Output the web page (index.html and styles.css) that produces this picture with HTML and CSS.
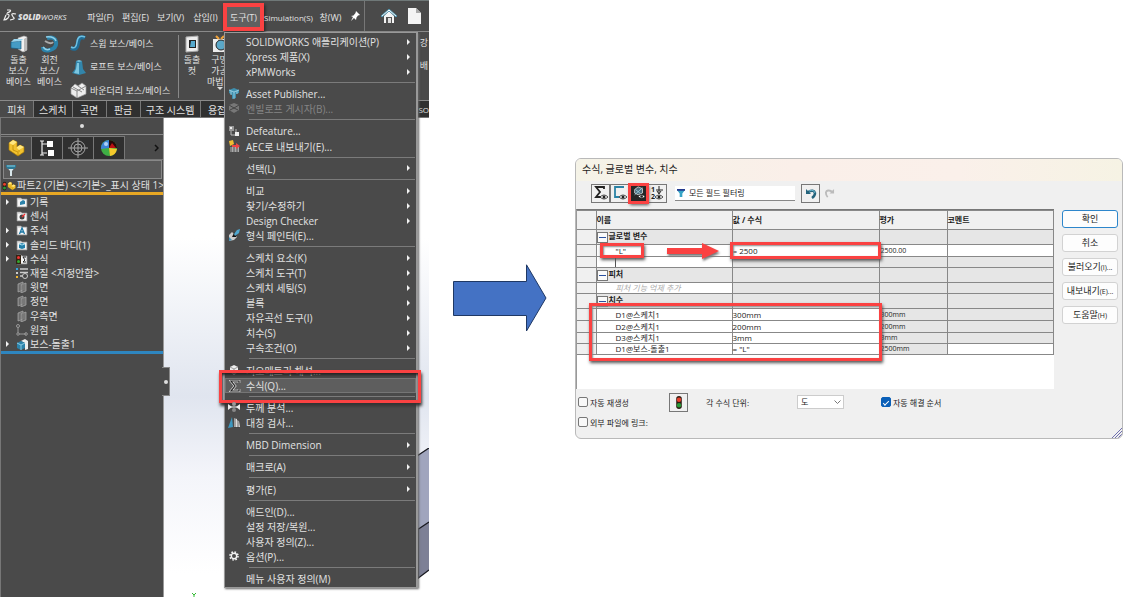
FILE: index.html
```html
<!DOCTYPE html>
<html lang="ko">
<head>
<meta charset="utf-8">
<meta name="viewport" content="width=device-width, initial-scale=1">
<title>SOLIDWORKS 수식</title>
<link rel="stylesheet" href="styles.css">
</head>
<body>
<svg class="defs" aria-hidden="true">
  <defs>
    <symbol id="boss" viewBox="0 0 18 18"><path d="M8 3l6-2 3 1v13l-4 2-5-3z" fill="#f2f2f2" stroke="#aaa" stroke-width=".6"/><path d="M14 4l3-2v13l-3 2z" fill="#bbb"/><path d="M1 7l10-1v8L1 13z" fill="#459cc5" stroke="#155d83" stroke-width=".7"/><path d="M1 7l3-3h9l-2 2z" fill="#9ad5ee"/></symbol>
    <symbol id="folder" viewBox="0 0 12 12"><path d="M1 2h4l1 1h5v8H1z" fill="#ddd" stroke="#999" stroke-width=".6"/><path d="M2 4h8v6H2z" fill="#f6f6f6"/></symbol>
    <symbol id="plane" viewBox="0 0 12 12"><path d="M2 3l5-2v8l-5 2zM5 4l5-2v8l-5 2z" fill="#777" stroke="#aaa" stroke-width=".7"/><path d="M4 4v6M7 3v7" stroke="#555" stroke-width=".6"/></symbol>
    <symbol id="part" viewBox="0 0 18 18"><path d="M2 4l4-3 4 2v5l3-2 4 2v5l-6 4-9-6z" fill="#f2c230" stroke="#a97800" stroke-width=".7"/><path d="M2 4l4 2 4-3-4-2zM10 9l2 2 5-3-4-2-3 2z" fill="#ffe781"/><path d="M6 6v5l5 2v4M12 11v2" fill="none" stroke="#b78400" stroke-width=".7"/></symbol>
    <symbol id="funnel" viewBox="0 0 10 12"><path d="M0 2h10L6 7v5H4V7z" fill="#d8e6ea"/><path d="M0 1h10v2L8 5H2L0 3z" fill="#2b7995"/><path d="M1 2h8" stroke="#8ed0e2"/></symbol>
    <symbol id="lights" viewBox="0 0 8 14"><rect x="1" y="0" width="6" height="14" rx="3" fill="#2b1b12"/><circle cx="4" cy="4" r="2.4" fill="#e7402d"/><circle cx="4" cy="10" r="2.4" fill="#289a37"/></symbol>
    <symbol id="eye" viewBox="0 0 8 6"><path d="M0 3q4-4 8 0-4 4-8 0z" fill="#fff" stroke="#222" stroke-width=".8"/><circle cx="4" cy="3" r="1.5" fill="#222"/></symbol>
  </defs>
</svg>

<main class="stage">
  <section class="app" aria-label="SOLIDWORKS">
    <header class="menubar">
      <div class="logo">
        <svg width="14" height="14" viewBox="0 0 14 14" fill="none" stroke="#eee" stroke-width="1.2"><path d="M4 1h3q2 1-3 3M3 5q5 0 2 4-2 2-4 2l2-5M13 5q-5-1-4 1t2 3-4 2"/></svg>
        <span><b>SOLID</b>WORKS</span>
      </div>
      <nav class="menus">
        <button>파일(F)</button><button>편집(E)</button><button>보기(V)</button><button>삽입(I)</button><button class="open">도구(T)</button><button class="simulation">Simulation(S)</button><button>창(W)</button>
      </nav>
      <svg class="pin" width="10" height="10" viewBox="0 0 10 10"><path d="M5 0l4 4-2 .5L5.500 6.500 5 9 3 7 0 10l2-4-2-1 2.500-.5L4.500 2z" fill="#fff"/></svg>
      <div class="quick">
        <svg width="16" height="16" viewBox="0 0 16 16"><path d="M3 8l5-5 5 5v7H3z" fill="#f5f5f5"/><path d="M0 8l8-7 8 7-1 1-7-6-7 6z" fill="#fff" stroke="#3b8fb0" stroke-width=".8"/><path d="M5 9h6v6H5z" fill="#555"/><path d="M7 10h3v5H7z" fill="#ddd"/></svg>
        <svg width="13" height="16" viewBox="0 0 13 16"><path d="M0 0h8l5 5v11H0z" fill="#f4f4f4"/><path d="M8 0v5h5z" fill="#aaa"/></svg>
      </div>
    </header>

    <div class="ribbon">
      <button class="tool"><svg width="18" height="18"><use href="#boss"/></svg>돌출<br>보스/<br>베이스</button>
      <button class="tool"><svg width="18" height="18" viewBox="0 0 18 18"><path d="M6 3q8-2 9 4t-6 8-7-3" fill="none" stroke="#2b82aa" stroke-width="4"/><path d="M4 6q6 4 8 1" fill="none" stroke="#aaa" stroke-width="2"/><path d="M5 2q8-1 10 4M2 12q3 4 7 2" fill="none" stroke="#90d0e8" stroke-width="1.500"/></svg>회전<br>보스/<br>베이스</button>
      <div class="tool-list">
        <button><svg width="17" height="16" viewBox="0 0 17 16"><path d="M1 13q6 3 7-5t7-5" fill="none" stroke="#206c95" stroke-width="4"/><path d="M1 12q5 3 6-5t8-5" fill="none" stroke="#6fc1e3" stroke-width="1.500"/></svg>스윕 보스/베이스</button>
        <button><svg width="17" height="16" viewBox="0 0 17 16"><path d="M6 2h6l1 8 3 4-7 2-7-2 3-4z" fill="#3285aa"/><path d="M6 2l3-1 3 1-3 1zM7 4h2v11l-5-1 2-4z" fill="#7cc5df"/></svg>로프트 보스/베이스</button>
        <button><svg width="17" height="16" viewBox="0 0 17 16"><path d="M1 6l4-4 3 2 4-3 4 3v8l-9 4-6-4z" fill="#eee" stroke="#999" stroke-width=".7"/><path d="M1 6l6 3 9-5M7 9v7M3 5l9 5M8 4l6 4" fill="none" stroke="#888"/></svg>바운더리 보스/베이스</button>
      </div>
      <button class="tool cut"><svg width="16" height="18" viewBox="0 0 16 18"><path d="M2 2l12-1v15L2 17z" fill="#eee" stroke="#aaa"/><path d="M5 5h7v8H5z" fill="#222"/><path d="M7 6h4v6H6z" fill="#56a9cd"/></svg>돌출<br>컷</button>
      <button class="tool hole"><svg width="16" height="18" viewBox="0 0 16 18"><path d="M1 4h13v13H1z" fill="#eee"/><circle cx="9" cy="10" r="5" fill="#5ba8c8" stroke="#222"/><path d="M4 1l3 3M12 1L9 4" stroke="#f0a33a" stroke-width="2"/></svg>구멍<br>가공<br>마법사<i></i></button>
      <div class="ribbon-end"><span>강</span><span>배</span></div>
    </div>

    <nav class="tabs">
      <button class="active">피처</button><button>스케치</button><button>곡면</button><button>판금</button><button class="wide">구조 시스템</button><button>용접</button><button class="last">SO</button>
    </nav>

    <div class="work">
      <aside class="panel">
        <div class="grip"><i></i></div>
        <div class="panel-tabs">
          <button class="active" aria-label="트리"><svg width="18" height="18"><use href="#part"/></svg></button>
          <button aria-label="속성"><svg width="18" height="18" viewBox="0 0 18 18"><path d="M4 2v14M4 5h5M4 14h5M2 2h4M2 16h4" fill="none" stroke="#eee" stroke-width="1.200"/><path d="M9 2h6v6H9zM10 11h6v6h-6z" fill="#fff"/></svg></button>
          <button aria-label="치수"><svg width="20" height="20" viewBox="0 0 20 20" fill="none" stroke="#a5a5a5"><circle cx="10" cy="10" r="7"/><circle cx="10" cy="10" r="4"/><path d="M10 0v20M0 10h20"/></svg></button>
          <button aria-label="표시"><svg width="18" height="18" viewBox="0 0 18 18"><circle cx="9" cy="9" r="8" fill="#3fae45"/><path d="M9 9L1 10A8 8 0 0 1 9 1z" fill="#3b83d8"/><path d="M9 9V1a8 8 0 0 1 8 8z" fill="#260a0a"/><path d="M9 9l3-5 4 5z" fill="#b11"/><path d="M9 9l8 1q-1 6-7 7z" fill="#f5c92b"/><circle cx="6" cy="5" r="2" fill="#c9e2ff" opacity=".8"/></svg></button>
          <span class="more"><svg width="5" height="8" viewBox="0 0 5 8"><path d="M1 1l3 3-3 3" fill="none" stroke="#111" stroke-width="1.500"/></svg></span>
        </div>
        <div class="tree-filter"><svg width="10" height="12"><use href="#funnel"/></svg></div>
        <div class="root"><svg width="5" height="12"><use href="#lights" width="5" height="12"/></svg><svg width="9" height="10"><use href="#part"/></svg><span>파트2 (기본) &lt;&lt;기본&gt;_표시 상태 1&gt;</span></div>
        <ul class="tree">
          <li class="branch"><svg width="12" height="12" viewBox="0 0 12 12"><use href="#folder"/><path d="M4 9V6l3-2 2 1v3z" fill="#2b82aa"/></svg>기록</li>
          <li><svg width="12" height="12" viewBox="0 0 12 12"><use href="#folder"/><circle cx="6" cy="7" r="2.500" fill="#444"/><path d="M6 7l3-3" stroke="#e33" stroke-width="1.500"/></svg>센서</li>
          <li class="branch"><svg width="12" height="12" viewBox="0 0 12 12"><use href="#folder"/><path d="M3.500 10L6 4l2.500 6M4.500 8h3" fill="none" stroke="#1d77a4" stroke-width="1.300"/></svg>주석</li>
          <li class="branch"><svg width="12" height="12" viewBox="0 0 12 12"><use href="#folder"/><path d="M3 5l3-1 3 1v4l-3 1-3-1z" fill="#2380aa"/><path d="M3 5l3 1 3-1" fill="none" stroke="#a2dbef"/></svg>솔리드 바디(1)</li>
          <li class="branch"><svg width="12" height="12" viewBox="0 0 12 12"><use href="#folder"/><path d="M0 2h5v9H0z" fill="#321"/><circle cx="2.500" cy="4.500" r="1.500" fill="#e33"/><circle cx="2.500" cy="8.500" r="1.500" fill="#3a3"/><path d="M10 4H7l2 3-2 2h3" fill="none" stroke="#222"/></svg>수식</li>
          <li><svg width="12" height="12" viewBox="0 0 12 12"><path d="M4 2h8M4 5.500h8M4 9h4" stroke="#ccc" stroke-width="1.500"/><path d="M0 1h2v2H0z" fill="#36a3da"/><path d="M0 5h2v2H0z" fill="#ccc"/><path d="M0 9h2v2H0z" fill="#efb52c"/><circle cx="9" cy="9" r="2.500" fill="#444" stroke="#ccc"/></svg>재질 &lt;지정안함&gt;</li>
          <li><svg width="12" height="12"><use href="#plane"/></svg>윗면</li>
          <li><svg width="12" height="12"><use href="#plane"/></svg>정면</li>
          <li><svg width="12" height="12"><use href="#plane"/></svg>우측면</li>
          <li><svg width="12" height="12" viewBox="0 0 12 12" fill="none" stroke="#999"><path d="M2 3v7h8"/><circle cx="2" cy="2" r="1.500"/><circle cx="10" cy="10" r="1.300"/><path d="M1 9h2v2H1z" fill="#222"/></svg>원점</li>
          <li class="branch"><svg width="12" height="12" viewBox="0 0 12 12"><path d="M5 3l4-2 3 2v8l-3 1V5z" fill="#eee"/><path d="M1 5l4-2 4 2v5l-4 2-4-2z" fill="#2b82aa"/><path d="M1 5l4 2 4-2M5 7v5" fill="none" stroke="#a2dbef" stroke-width=".8"/></svg>보스-돌출1</li>
        </ul>
      </aside>
      <div class="viewport">
        <div class="handle"><i></i></div>
        <svg class="model" width="12" height="132" viewBox="0 0 12 132"><path d="M0 8L12 0v74L0 82z" fill="#a0a5bd"/><path d="M0 82l12-8v48L0 131z" fill="#7d8096"/><path d="M0 8L12 0M0 82l12-8M0 131l12-9M1 82v49" fill="none" stroke="#17181f" stroke-width="1.300"/></svg>
        <svg class="axis" width="6" height="5" viewBox="0 0 6 5"><path d="M1 1l2 2 2-2M3 3v2" fill="none" stroke="#3b3"/></svg>
      </div>
    </div>

    <div class="popup" role="menu">
      <button class="sub">SOLIDWORKS 애플리케이션(P)</button>
      <button class="sub">Xpress 제품(X)</button>
      <button class="sub">xPMWorks</button>
      <hr>
      <button><svg width="12" height="12" viewBox="0 0 12 12"><path d="M1 3l5-2 5 2v3L8 7v4l-4 1V8L1 6z" fill="#3f8fae"/><path d="M1 3l5 2 5-2M6 5v7M3 4v4M9 4v3" fill="none" stroke="#a9dcec" stroke-width=".8"/></svg>Asset Publisher...</button>
      <button disabled><svg width="12" height="12" viewBox="0 0 12 12"><path d="M1 3l5-2 5 2v5l-5 3-5-3z" fill="#777"/><path d="M1 3l5 3 5-3M2 8l4-2 4 2" fill="none" stroke="#444"/></svg>엔빌로프 게시자(B)...</button>
      <hr>
      <button><svg width="12" height="12" viewBox="0 0 12 12"><path d="M1 1h5v5H1z" fill="#999"/><path d="M2 2h2v2H2zM7 7h4v4H7z" fill="#eee"/><path d="M3 6v4h4M8 4v3" stroke="#bbb" fill="none"/></svg>Defeature...</button>
      <button><svg width="12" height="12" viewBox="0 0 12 12"><path d="M2 7h9v5H2z" fill="#aaa"/><path d="M3 7v5M6 7v5M9 7v5" stroke="#555"/><path d="M1 1l4-1 1 4-4 2z" fill="#f3bd31"/><path d="M4 5h4V3l4 3-4 3V7H4z" fill="#e44"/></svg>AEC로 내보내기(E)...</button>
      <hr>
      <button class="sub">선택(L)</button>
      <hr>
      <button class="sub">비교</button>
      <button class="sub">찾기/수정하기</button>
      <button class="sub">Design Checker</button>
      <button><svg width="12" height="12" viewBox="0 0 12 12"><path d="M1 6l3-3 5 5-3 3-5 1z" fill="#ccc"/><path d="M4 8l2-4 3-1-1 5z" fill="#111"/><path d="M6 5l3-4 3-1-1 4-4 3z" fill="#4fa7cf"/><path d="M1 12V8l3 3z" fill="#418fb4"/></svg>형식 페인터(E)...</button>
      <hr>
      <button class="sub">스케치 요소(K)</button>
      <button class="sub">스케치 도구(T)</button>
      <button class="sub">스케치 세팅(S)</button>
      <button class="sub">블록</button>
      <button class="sub">자유곡선 도구(I)</button>
      <button class="sub">치수(S)</button>
      <button class="sub">구속조건(O)</button>
      <hr>
      <button><svg width="12" height="12" viewBox="0 0 12 12"><path d="M2 3l4-2 4 2v5l-4 3-4-3z" fill="#eee"/><path d="M2 3l4 2 4-2M6 5v6" fill="none" stroke="#999"/></svg>지오메트리 해석...</button>
      <button class="current"><svg width="12" height="12" viewBox="0 0 12 12"><path d="M10 3V1H2l4 5-4 5h8V9" fill="none" stroke="#ddd" stroke-width="2.600"/><path d="M10 3V1H2l4 5-4 5h8V9" fill="none" stroke="#222" stroke-width="1.200"/></svg>수식(Q)...</button>
      <hr>
      <button><svg width="12" height="12" viewBox="0 0 12 12"><path d="M0 3l4 3-4 3zM12 3L8 6l4 3z" fill="#eee"/><path d="M0 6h12" stroke="#eee"/><circle cx="6" cy="3" r="2" fill="#999"/><circle cx="6" cy="9" r="2" fill="#888"/></svg>두께 분석...</button>
      <button><svg width="12" height="12" viewBox="0 0 12 12"><path d="M4 1l1 10-5 1z" fill="#3d98c0"/><path d="M6 2l3 1v8H6zM9 4l2 1 1 6H9z" fill="#ddd"/><path d="M7 2v10M10 4v8" stroke="#333" stroke-width=".7"/></svg>대칭 검사...</button>
      <hr>
      <button class="sub">MBD Dimension</button>
      <hr>
      <button class="sub">매크로(A)</button>
      <hr>
      <button class="sub">평가(E)</button>
      <hr>
      <button>애드인(D)...</button>
      <button>설정 저장/복원...</button>
      <button>사용자 정의(Z)...</button>
      <button><svg width="12" height="12" viewBox="0 0 12 12" fill="none" stroke="#f2f2f2"><circle cx="6" cy="6" r="2.700" stroke-width="1.400"/><circle cx="6" cy="6" r="4" stroke-width="1.600" stroke-dasharray="1.600 1.540"/></svg>옵션(P)...</button>
      <hr>
      <button>메뉴 사용자 정의(M)</button>
    </div>
  </section>

  <div class="step">
    <svg viewBox="0 0 94 68"><path d="M.5 17.500h73V.8L93 34 73.500 67V51.500H.5z" fill="#4472c4" stroke="#1f3864"/></svg>
  </div>

  <section class="dialog" aria-label="수식">
    <h1>수식, 글로벌 변수, 치수</h1>
    <div class="toolbar">
      <button aria-label="수식 뷰"><svg width="16" height="16" viewBox="0 0 16 16"><path d="M11 4V2H3l4 5-4 5h5" fill="none" stroke="#222" stroke-width="1.800"/><use href="#eye" x="7" y="9" width="8" height="6"/></svg></button>
      <button aria-label="스케치 뷰"><svg width="16" height="16" viewBox="0 0 16 16"><path d="M12 2H3v10h4" fill="none" stroke="#2a82a5" stroke-width="1.800"/><use href="#eye" x="7" y="9" width="8" height="6"/></svg></button>
      <button class="on marked" aria-label="치수 뷰"><svg width="14" height="14" viewBox="0 0 16 16"><path d="M3 4l4-3 5 2v5L7 10 3 8z" fill="#4d6d7d" stroke="#ccc"/><path d="M3 10l9-8M4 4l5 4" stroke="#9bd2e5"/><use href="#eye" x="7" y="9" width="8" height="6"/></svg></button>
      <button class="order" aria-label="순서 뷰"><span>1<br>2</span><svg width="9" height="15" viewBox="0 0 9 15"><path d="M4 0v7M1 4h7M2 5l2 3 2-3" fill="none" stroke="#222"/><use href="#eye" y="8" width="8" height="6"/></svg></button>
      <label class="filter"><svg width="8" height="8" viewBox="0 0 9 9"><path d="M0 1h9L6 5v4H3V5z" fill="#37a4c6"/><path d="M0 0h9v2H0z" fill="#243a8e"/></svg><input type="text" value="모든 필드 필터링" aria-label="필터"></label>
      <button class="undo" aria-label="실행 취소"><svg width="12" height="11" viewBox="0 0 12 11"><path d="M1 1v5h5z" fill="#24637c"/><path d="M3 4q6-3 7 1 0 3-3 5" fill="none" stroke="#24637c" stroke-width="2.500"/><path d="M4 3q5-2 6 2" fill="none" stroke="#6cb8d0"/></svg></button>
      <svg class="redo" width="11" height="10" viewBox="0 0 12 11"><path d="M11 1v5H6z" fill="#bbb"/><path d="M9 4q-6-3-7 1 0 3 2 5" fill="none" stroke="#bbb" stroke-width="2"/></svg>
    </div>

    <div class="main">
      <div class="grid-box">
        <table>
          <colgroup><col class="c-head"><col class="c-name"><col class="c-value"><col class="c-result"><col></colgroup>
          <thead><tr><th></th><th>이름</th><th>값 / 수식</th><th>평가</th><th>코멘트</th></tr></thead>
          <tbody>
            <tr class="group"><td></td><td><i class="fold"></i>글로벌 변수</td><td></td><td></td><td></td></tr>
            <tr class="md edit"><td></td><td class="item">"L"<span class="mark mark-name"></span><svg class="pointer" width="54" height="18" viewBox="0 0 54 18"><path d="M1 6h35V1l17 8-17 8v-5H1z" fill="#fa4242"/></svg></td><td>= 2500<span class="mark mark-value"></span></td><td class="white">2500.00</td><td class="white"></td></tr>
            <tr class="sm"><td></td><td class="white caret"></td><td></td><td></td><td></td></tr>
            <tr class="group"><td></td><td><i class="fold"></i>피처</td><td></td><td></td><td></td></tr>
            <tr class="sm"><td></td><td class="item white hint">피처 기능 억제 추가</td><td></td><td></td><td></td></tr>
          </tbody>
          <tbody class="dims">
            <tr class="group"><td><span class="mark mark-dims"></span></td><td><i class="fold"></i>치수</td><td></td><td></td><td></td></tr>
            <tr class="md edit"><td></td><td class="item">D1@스케치1</td><td>300mm</td><td>300mm</td><td></td></tr>
            <tr class="md edit"><td></td><td class="item">D2@스케치1</td><td>200mm</td><td>200mm</td><td></td></tr>
            <tr class="sm edit"><td></td><td class="item">D3@스케치1</td><td>3mm</td><td>3mm</td><td></td></tr>
            <tr class="sm edit"><td></td><td class="item">D1@보스-돌출1</td><td>= "L"</td><td>2500mm</td><td class="white"></td></tr>
          </tbody>
        </table>
      </div>
      <div class="actions">
        <button class="primary">확인</button>
        <button>취소</button>
        <button>불러오기<small>(I)...</small></button>
        <button>내보내기<small>(E)...</small></button>
        <button>도움말<small>(H)</small></button>
      </div>
    </div>

    <div class="footer">
      <label class="check"><input type="checkbox">자동 재생성</label>
      <button class="rebuild" aria-label="재생성"><svg width="8" height="13"><use href="#lights"/></svg></button>
      <label for="unit" class="unit">각 수식 단위:</label>
      <select id="unit"><option>도</option></select>
      <label class="check"><input type="checkbox" checked>자동 해결 순서</label>
      <label class="check link"><input type="checkbox">외부 파일에 링크:</label>
    </div>
    <svg class="resize" width="10" height="10" viewBox="0 0 10 10"><path d="M0 10L10 0M3 10l7-7M6 10l4-4M9 10l1-1" stroke="#6f6fae"/></svg>
  </section>
</main>
</body>
</html>
```
FILE: styles.css
```css
* { box-sizing: border-box; }
body { margin: 0; background: #fff; font-family: "Open Sans", "Noto Sans CJK KR", sans-serif; font-size: 10px; }
button, input, select { font: inherit; color: inherit; margin: 0; padding: 0; border: 0; background: none; border-radius: 0; }
svg { display: block; flex: none; }
.defs { position: absolute; width: 0; height: 0; }

.stage { display: grid; grid-template-columns: 429fr 146fr 548fr; align-items: start; min-height: 100vh; }

/* Application window */
.app { position: relative; display: flex; flex-direction: column; height: 100vh; min-height: 560px; overflow: hidden; background: #4a4a4a; color: #e2e2e2; }
.menubar { display: flex; align-items: center; height: 32px; border-top: 1px solid #6f7878; border-bottom: 1px solid #8a8a8a; font-size: 9px; white-space: nowrap; }
.logo { display: flex; align-items: center; gap: 1px; width: 83px; flex: none; padding-left: 3px; font-size: 8px; font-style: italic; }
.logo b { font-weight: 800; }
.menus { display: flex; flex: none; height: 100%; padding: 2px 0 0; }
.menus button { width: 35px; flex: none; text-align: center; white-space: nowrap; }
.menus .open { width: 41px; border: 4px solid #fa4242; background: #606060; box-shadow: 1px 2px 3px #222; }
.menus .simulation { width: 49px; font-size: 8px; }
.pin { margin: 0 3px; }
.quick { display: flex; align-items: center; gap: 11px; height: 100%; padding-left: 16px; border-left: 1px solid #777; }

.ribbon { display: flex; height: 69px; padding: 3px 0 2px 3px; font-size: 9px; line-height: 11px; border-bottom: 1px solid #8a8a8a; }
.tool { display: flex; flex-direction: column; align-items: center; width: 31px; white-space: nowrap; line-height: 11px; }
.tool svg { margin-bottom: 1px; }
.tool-list { display: flex; flex-direction: column; justify-content: space-between; width: 113px; padding-left: 5px; }
.tool-list button { display: flex; align-items: center; gap: 3px; height: 16px; white-space: nowrap; }
.cut { width: 27px; border-left: 1px solid #888; }
.hole { width: 29px; }
.hole i { border: 3px solid transparent; border-top-color: #ddd; }
.ribbon-end { display: flex; flex-direction: column; gap: 12px; margin-left: auto; padding: 2px 1px 0 0; }

.tabs { display: flex; height: 17px; border-bottom: 1px solid #777; }
.tabs button { min-width: 34px; padding: 0 5px; background: #303030; border-right: 1px solid #777; white-space: nowrap; }
.tabs .active { background: #4a4a4a; }
.tabs .wide { width: 60px; }
.tabs .last { flex: 1; padding: 0; font-size: 8px; text-align: right; border: 0; }

.work { display: flex; flex: 1; min-height: 0; }
.panel { width: 38%; flex: none; border-left: 1px solid #777; overflow: hidden; }
.grip { display: flex; align-items: center; justify-content: center; height: 17px; border-bottom: 1px solid #888; }
.grip i, .handle i { width: 4px; height: 4px; border-radius: 50%; background: #ddd; }
.panel-tabs { display: flex; height: 24px; margin-top: 1px; }
.panel-tabs button { display: grid; place-items: center; width: 31px; background: #303030; border: solid #777; border-width: 1px 1px 1px 0; }
.panel-tabs .active { background: #4a4a4a; border-bottom-color: #4a4a4a; }
.more { display: flex; flex: 1; align-items: center; justify-content: flex-end; padding-right: 4px; border-bottom: 1px solid #777; }
.tree-filter { display: flex; align-items: center; height: 19px; margin: 0 1px 0 2px; padding-left: 2px; background: #5a5a5a; border: 1px solid #888; }
.root { display: flex; align-items: center; height: 16px; padding-left: 1px; white-space: nowrap; border-bottom: 3px solid #e8a824; line-height: 13px; }
.root span { margin-left: 1px; }
.tree { display: grid; grid-auto-rows: 1fr; min-height: 159px; margin: 0; padding: 0; list-style: none; border-bottom: 3px solid #2e86c0; }
.tree li { display: flex; align-items: center; gap: 2px; padding-left: 15px; white-space: nowrap; line-height: 14px; }
.tree .branch { padding-left: 5px; }
.tree .branch::before { content: ""; width: 8px; height: 6px; background: #f2f2f2; clip-path: polygon(0 0, 3px 3px, 0 6px); }

.viewport { position: relative; flex: 1; border-left: 1px solid #999; background: linear-gradient(#fff 25%, #e0e5ef 58%, #f4f5fa 75%, #fff 95%); }
.handle { position: absolute; left: -2px; top: 52%; display: grid; place-items: center; width: 8px; height: 29px; background: #4a4a4a; border: 1px solid #888; border-left: 0; }
.model { position: absolute; right: 0; bottom: 17px; }
.axis { position: absolute; left: 27px; bottom: 0; }

.popup { position: absolute; right: 11px; top: 32px; bottom: 9px; width: 194px; display: flex; flex-direction: column; padding: 1px 0; background: #4a4a4a; border: 1px solid #999; border-right-width: 2px; box-shadow: 1px 1px 2px #666; }
.popup button { position: relative; display: flex; align-items: center; height: 15px; flex: none; padding-left: 21px; white-space: nowrap; text-align: left; }
.popup button svg { position: absolute; left: 3px; top: 1px; }
.popup button:disabled { color: #858585; }
.popup .sub::after { content: ""; margin-left: auto; margin-right: 6px; border: 3px solid transparent; border-left-color: #f2f2f2; border-right: 0; }
.popup hr { flex: 1; width: auto; min-height: 1px; margin: 0 1px 0 24px; border: 0; background: linear-gradient(#7b7b7b, #7b7b7b) center / 100% 1px no-repeat; }
.popup .current { background: #5e5e5e; border: 1px solid #757575; padding-left: 20px; }
.popup .current::before { content: ""; position: absolute; inset: -9px -6px -11px -7px; border: 3px solid #fa4242; box-shadow: 1px 3px 3px #333, inset 1px 2px 3px #222; }

.step { padding: 264px 28px 0 24px; }
.step svg { width: 100%; }

/* Equations dialog */
.dialog { position: relative; margin-top: 158px; min-height: 281px; overflow: hidden; background: #f0f0f0; border: 1px solid #b9b9b9; border-radius: 6px; color: #1c1c1c; font-size: 8px; }
.dialog h1 { height: 22px; margin: 0; padding-left: 6px; font-size: 10px; font-weight: 400; line-height: 20px; background: linear-gradient(90deg, #f5f3e7, #faefe9 40%, #faf0ea 70%, #f6f3e4); }
.toolbar { display: flex; align-items: center; height: 28px; padding: 0 0 4px 15px; }
.toolbar button { display: grid; place-items: center; width: 19px; height: 19px; border: 1px solid #777; }
.toolbar .on { background: #252525; }
.toolbar .marked { border: 0; outline: 3px solid #fa4242; outline-offset: -2px; box-shadow: 1px 2px 3px #555; z-index: 1; }
.toolbar .order { display: flex; align-items: center; justify-content: center; font-size: 7px; font-weight: 700; line-height: 7px; }
.filter { display: flex; align-items: center; gap: 4px; width: 120px; height: 15px; margin: 0 6px 0 8px; padding-left: 2px; background: #fff; border-bottom: 1px solid #888; }
.filter input { width: 100px; height: 13px; outline: 0; font-size: 8px; }
.redo { margin-left: 4px; }

.main { display: flex; gap: 8px; padding-right: 4px; }
.grid-box { flex: 1; height: 180px; background: #fff; border-top: 1px solid #777; border-left: 1px solid #999; }
table { width: 100%; table-layout: fixed; border-collapse: collapse; line-height: 10px; }
.c-head { width: 19px; }
.c-name { width: 136px; }
.c-value { width: 147px; }
.c-result { width: 68px; }
th, td { padding: 0; border: 1px solid #888; text-align: left; white-space: nowrap; background: #e6e6e6; }
th { height: 19px; background: #f0f0f0; font-weight: 700; }
th:first-child, td:first-child { background: #f0f0f0; border-left: 0; }
td { position: relative; }
.group td { height: 15px; font-weight: 700; }
.md td { height: 12px; }
.sm td { height: 11px; }
.edit td:nth-child(2), .edit td:nth-child(3), td.white { background: #fff; }
.edit td:nth-child(4) { padding-left: 1px; font-size: 7px; }
td.item { padding-left: 19px; }
td.hint { color: #aaa; font-style: italic; }
td.caret::before { content: ""; position: absolute; left: 18px; top: 0; bottom: 0; border-left: 1px solid #555; }
.fold { display: inline-block; width: 11px; height: 11px; margin-right: 1px; vertical-align: middle; border: 1px solid #777; background: linear-gradient(#2b51a0, #2b51a0) center / 7px 1px no-repeat #fafafa; }
.mark { position: absolute; z-index: 2; border: 3px solid #fa4242; box-shadow: 1px 2px 3px #555, inset 1px 1px 2px #888; pointer-events: none; }
.mark-name { left: 3px; top: -2px; width: 44px; height: 15px; }
.mark-value { inset: -3px -2px -3px -3px; }
.pointer { position: absolute; right: 12px; top: -3px; z-index: 2; filter: drop-shadow(1px 2px 1px #777); }
.dims, .dims td { position: static; }
.dims { position: relative; }
.mark-dims { left: 12px; top: 9px; width: 293px; bottom: -6px; }

.actions { display: flex; flex-direction: column; gap: 6px; width: 56px; padding-top: 1px; font-size: 9px; }
.actions button { height: 18px; background: #fdfdfd; border: 1px solid #d2d2d2; border-radius: 3px; white-space: nowrap; line-height: 14px; }
.actions .primary { border-color: #2d86cb; }
.actions small { font-size: 7px; }

.footer { display: grid; grid-template-columns: 91px 37px 91px 84px auto; grid-template-rows: 20px 20px; align-items: center; padding: 3px 0 0 2px; }
.check { display: flex; align-items: center; gap: 2px; white-space: nowrap; }
.check input { appearance: none; flex: none; width: 10px; height: 10px; border: 1px solid #777; border-radius: 2px; background: #f8f8f8; }
.check input:checked { border-color: #0a5fb8; background: #0a5fb8; display: grid; place-items: center; }
.check input:checked::before { content: ""; width: 5px; height: 2px; border: solid #fff; border-width: 0 0 1px 1px; rotate: -45deg; }
.link { grid-column: 1 / 3; }
.rebuild { display: grid; place-items: center; width: 19px; height: 19px; border: 1px solid #777; }
.footer select { appearance: none; width: 47px; height: 14px; padding-left: 3px; border: 1px solid #ccc; background: #fff url("data:image/svg+xml,%3Csvg xmlns='http://www.w3.org/2000/svg' width='7' height='4'%3E%3Cpath d='M.5.5l3 3 3-3' fill='none' stroke='%23777'/%3E%3C/svg%3E") no-repeat right 2px center; line-height: 12px; }
.resize { position: absolute; right: 0; bottom: 0; }
```
